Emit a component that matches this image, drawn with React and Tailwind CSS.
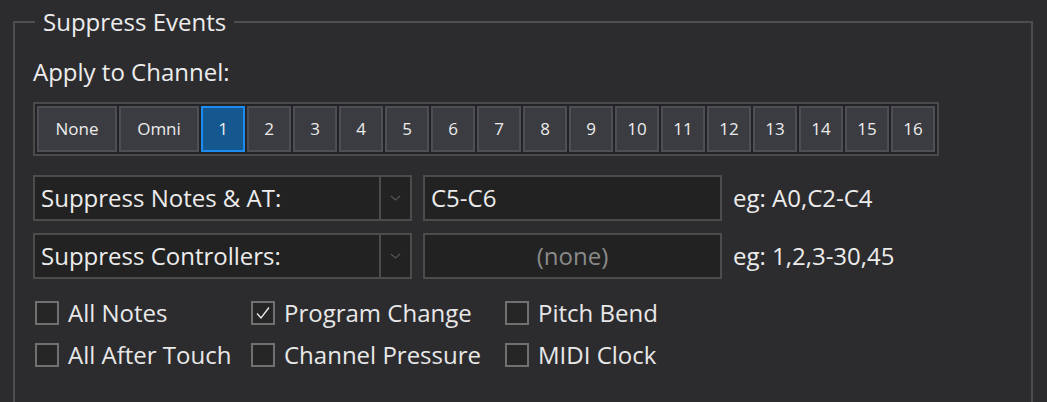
import React, { useState } from 'react';

const channels = ['1', '2', '3', '4', '5', '6', '7', '8', '9', '10', '11', '12', '13', '14', '15', '16'];

function ChannelButton({ label, active, wide, onClick }) {
  return (
    <button
      onClick={onClick}
      className={
        'h-[46px] flex items-center justify-center border-2 text-[17px] font-medium text-[#ececec] ' +
        (wide ? 'w-[80px] ' : 'w-[44px] ') +
        (active ? 'bg-[#14588f] border-[#1c8cf0]' : 'bg-[#3b3c41] border-[#4e4f54]')
      }
    >
      {label}
    </button>
  );
}

function Combo({ label }) {
  return (
    <div className="w-[379px] h-[46px] flex border-2 border-[#4c4c4c] bg-[#222222]">
      <div className="flex-1 flex items-center pl-[6px] text-[#ececec]">{label}</div>
      <div className="w-[31px] border-l-2 border-[#4c4c4c] flex items-center justify-center">
        <svg width="11" height="6" viewBox="0 0 11 6" fill="none">
          <path d="M1 1l4.5 4L10 1" stroke="#555" strokeWidth="1.2" />
        </svg>
      </div>
    </div>
  );
}

function Check({ label, checked, width }) {
  return (
    <label className={'flex items-center gap-[9px] ' + width}>
      <span className="w-[24px] h-[24px] border-2 border-[#707070] bg-[#262626] flex items-center justify-center shrink-0">
        {checked && (
          <svg width="16" height="14" viewBox="0 0 16 14" fill="none">
            <path d="M2 7.5l4 4.5L14 1.5" stroke="#e8e8e8" strokeWidth="1.4" />
          </svg>
        )}
      </span>
      <span className="text-[#e8e8e8]">{label}</span>
    </label>
  );
}

export default function App() {
  const [channel, setChannel] = useState('1');

  return (
    <div
      className="w-[1047px] h-[402px] overflow-hidden bg-[#2c2c2f] pl-[13px] pr-[14px] pt-[7px] text-[24px] leading-[30px]"
      style={{ fontFamily: '"Open Sans", "Noto Sans", sans-serif' }}
    >
      <fieldset className="h-[500px] border-2 border-[#4e4e50] pl-[18px] pr-4">
        <legend className="ml-[2px] px-[8px] text-[#ececec]">Suppress Events</legend>

        <div className="mt-[20px] text-[#ececec]">Apply to Channel:</div>

        <div className="mt-[15px] inline-flex gap-[2px] border-2 border-[#4a4a4c] bg-[#232325] p-[2px]">
          <ChannelButton label="None" wide active={channel === 'none'} onClick={() => setChannel('none')} />
          <ChannelButton label="Omni" wide active={channel === 'omni'} onClick={() => setChannel('omni')} />
          {channels.map((c) => (
            <ChannelButton key={c} label={c} active={channel === c} onClick={() => setChannel(c)} />
          ))}
        </div>

        <div className="mt-[19px] flex items-center gap-[11px]">
          <Combo label="Suppress Notes & AT:" />
          <div className="w-[299px] h-[46px] border-2 border-[#4c4c4c] bg-[#222222] flex items-center pl-[6px] text-[#ececec]">
            C5-C6
          </div>
          <span className="text-[#ececec]">eg: A0,C2-C4</span>
        </div>

        <div className="mt-[12px] flex items-center gap-[11px]">
          <Combo label="Suppress Controllers:" />
          <div className="w-[299px] h-[46px] border-2 border-[#4c4c4c] bg-[#222222] flex items-center justify-center text-[#8a8a8a]">
            (none)
          </div>
          <span className="text-[#ececec]">eg: 1,2,3-30,45</span>
        </div>

        <div className="mt-[19px] flex flex-col gap-[12px] pl-[2px]">
          <div className="flex">
            <Check label="All Notes" width="w-[216px]" />
            <Check label="Program Change" checked width="w-[254px]" />
            <Check label="Pitch Bend" width="w-[200px]" />
          </div>
          <div className="flex">
            <Check label="All After Touch" width="w-[216px]" />
            <Check label="Channel Pressure" width="w-[254px]" />
            <Check label="MIDI Clock" width="w-[200px]" />
          </div>
        </div>
      </fieldset>
    </div>
  );
}
